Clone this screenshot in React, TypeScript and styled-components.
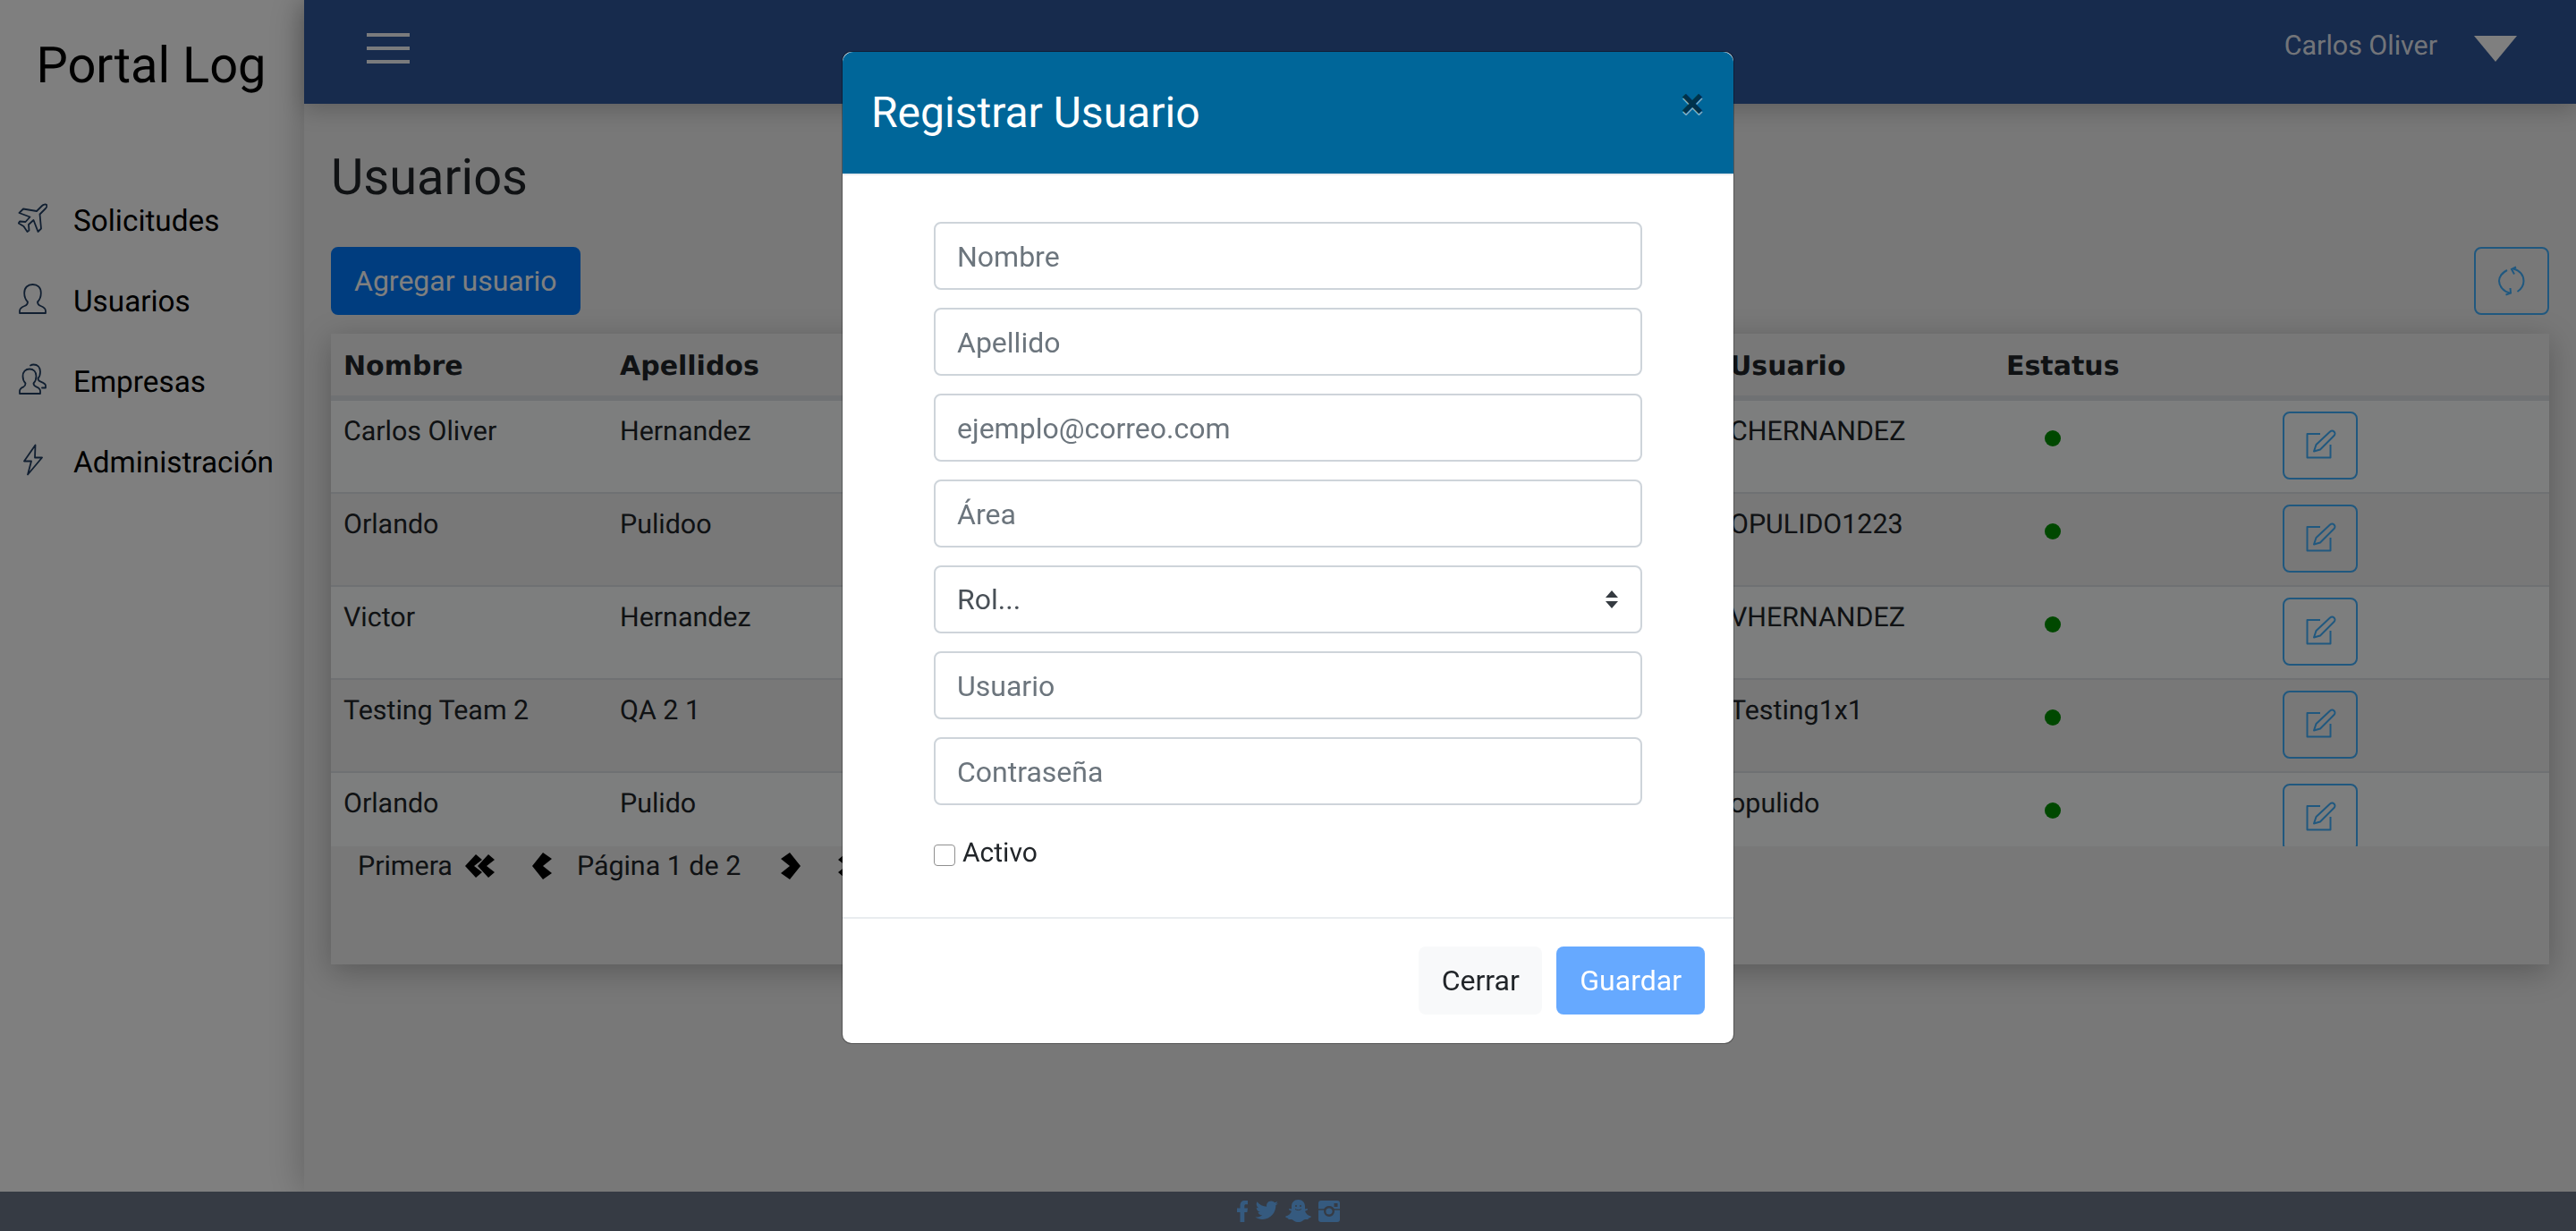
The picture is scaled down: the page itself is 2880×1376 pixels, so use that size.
import React from 'react'
import styled, { createGlobalStyle } from 'styled-components'

const GlobalStyle = createGlobalStyle`
  html, body {
    margin: 0;
    padding: 0;
    height: 100%;
    overflow: hidden;
    background: #fff;
  }

  * {
    box-sizing: border-box;
  }

  body {
    font-family: Roboto, "Liberation Sans", sans-serif;
    color: #212529;
    text-rendering: geometricPrecision;
  }
`

const Page = styled.div`
  width: 2880px;
  height: 1376px;
  display: flex;
  flex-direction: column;
  overflow: hidden;
`

const Body = styled.div`
  flex: 1;
  min-height: 0;
  display: flex;
`

const Sidebar = styled.aside`
  width: 340px;
  flex-shrink: 0;
  background: #fff;
`

const Brand = styled.div`
  height: 150px;
  padding: 40px 2px 0 0;
  font-size: 56px;
  line-height: 66px;
  text-align: center;
  color: #000;
`

const Nav = styled.nav`
  padding-top: 52px;
  display: flex;
  flex-direction: column;
`

const NavItem = styled.a`
  height: 90px;
  padding-left: 20px;
  display: flex;
  align-items: center;
  gap: 29px;
  font-size: 33.3px;
  color: #000;

  svg {
    width: 33px;
    height: 36px;
    flex-shrink: 0;
    margin-top: -6px;
  }
`

const Main = styled.div`
  flex: 1;
  min-width: 0;
  display: flex;
  flex-direction: column;
  background: #f0f0f0;
  box-shadow: 0 0 40px rgba(0, 0, 0, 0.25);
  position: relative;
`

const Topbar = styled.header`
  height: 116px;
  flex-shrink: 0;
  padding: 0 66px 0 70px;
  display: flex;
  align-items: center;
  justify-content: space-between;
  background: #2e569a;
  box-shadow: 0 6px 24px rgba(0, 0, 0, 0.22);
  position: relative;
`

const Burger = styled.div`
  width: 48px;
  height: 34px;
  margin-top: -8px;
  display: flex;
  flex-direction: column;
  justify-content: space-between;

  span {
    height: 4px;
    background: #fff;
    opacity: 0.95;
  }
`

const UserMenu = styled.div`
  display: flex;
  align-items: center;
  gap: 41px;
  margin-top: -13px;
  font-size: 30.4px;
  color: rgba(255, 255, 255, 0.9);
`

const Caret = styled.span`
  width: 0;
  height: 0;
  margin-top: 5px;
  border-left: 24px solid transparent;
  border-right: 24px solid transparent;
  border-top: 29px solid #fff;
`

const Content = styled.main`
  flex: 1;
  min-height: 0;
  padding: 43px 30px 0;
`

const Title = styled.h1`
  margin: 0;
  height: 117px;
  font-size: 56px;
  line-height: 78px;
  font-weight: 400;
`

const Toolbar = styled.div`
  height: 76px;
  display: flex;
  justify-content: space-between;
`

const PrimaryButton = styled.button`
  height: 76px;
  padding: 0 24px;
  border: 2px solid #007bff;
  border-radius: 8px;
  background: #007bff;
  color: #fff;
  font-family: inherit;
  font-size: 32px;
`

const OutlineButton = styled.button`
  width: 84px;
  height: 76px;
  padding: 0;
  border: 2px solid #40b0ff;
  border-radius: 8px;
  background: transparent;
  color: #40b0ff;
  display: flex;
  align-items: center;
  justify-content: center;

  svg {
    width: 36px;
    height: 36px;
  }
`

const Card = styled.section`
  margin-top: 21px;
  height: 705px;
  background: #f0f0f0;
  box-shadow: 0 8px 32px rgba(0, 0, 0, 0.25);
`

const TableClip = styled.div`
  height: 573px;
  overflow: hidden;
`

const Table = styled.table`
  width: 2480px;
  table-layout: fixed;
  border-collapse: separate;
  border-spacing: 0;
  font-size: 30.4px;
`

const HeadCell = styled.th`
  height: 73px;
  padding: 4px 14px 0;
  text-align: left;
  font-family: "DejaVu Sans", sans-serif;
  font-size: 30px;
  font-weight: 700;
  line-height: 40px;
  border-bottom: 4px solid #dee2e6;
`

const Row = styled.tr<{ $striped: boolean }>`
  height: 104px;
  background: ${({ $striped }) => ($striped ? '#fafdfc' : '#f0f0f0')};
`

const Cell = styled.td`
  padding: 12px 14px;
  vertical-align: top;
  line-height: 45px;
  color: #212529;
  border-top: 2px solid #dee2e6;
`

const StatusDot = styled.span`
  display: block;
  width: 18px;
  height: 18px;
  margin: 21px 0 0 43px;
  border-radius: 50%;
  background: #009000;
`

const Pagination = styled.div`
  padding: 0 0 0 30px;
  display: flex;
  align-items: center;
  height: 44px;
  font-size: 30.4px;
  white-space: nowrap;
  overflow: hidden;

  svg {
    flex-shrink: 0;
    fill: #000;
  }
`

const PageLabel = styled.span<{ $gap: number }>`
  margin-left: ${({ $gap }) => $gap}px;
`

const PageIcon = styled.svg<{ $gap: number }>`
  margin-left: ${({ $gap }) => $gap}px;
`

const Footer = styled.footer`
  height: 44px;
  flex-shrink: 0;
  display: flex;
  align-items: center;
  justify-content: center;
  gap: 8px;
  background: #6c7789;
  position: relative;
  color: #6ab4ff;

  svg {
    display: block;
  }
`

const Backdrop = styled.div`
  position: fixed;
  inset: 0;
  background: rgba(0, 0, 0, 0.5);
`

const Modal = styled.div`
  position: fixed;
  top: 58px;
  left: 942px;
  width: 996px;
  height: 1108px;
  display: flex;
  flex-direction: column;
  background: #fff;
  border-radius: 10px;
  box-shadow: 0 0 0 1px rgba(0, 0, 0, 0.3);
`

const ModalHeader = styled.div`
  height: 138px;
  flex-shrink: 0;
  padding: 32px;
  display: flex;
  justify-content: space-between;
  background: #006699;
  border-bottom: 2px solid #e9ecef;
  border-radius: 12px 12px 0 0;
`

const ModalTitle = styled.h4`
  margin: 0;
  font-size: 48px;
  line-height: 72px;
  font-weight: 400;
  color: #fff;
`

const CloseButton = styled.button`
  height: 48px;
  margin: 2px 1px 0 0;
  padding: 0;
  border: 0;
  background: transparent;
  font-family: inherit;
  font-size: 48px;
  font-weight: 700;
  line-height: 48px;
  color: #000;
  opacity: 0.5;
  text-shadow: 0 2px 0 #fff;
`

const ModalBody = styled.form`
  flex: 1;
  padding: 52px 102px 0;
  display: flex;
  flex-direction: column;
  gap: 20px;
`

const fieldStyles = `
  width: 100%;
  height: 76px;
  flex-shrink: 0;
  border: 2px solid #ced4da;
  border-radius: 8px;
  background-color: #fff;
  font-family: inherit;
  font-size: 32px;
  color: #495057;
  outline: none;
`

const Input = styled.input`
  ${fieldStyles}
  padding: 2px 24px 0;

  &::placeholder {
    color: #6c757d;
    opacity: 1;
  }
`

const Select = styled.select`
  ${fieldStyles}
  padding: 0 24px;
  appearance: none;
  background-image: url("data:image/svg+xml,%3Csvg xmlns='http://www.w3.org/2000/svg' width='16' height='20' viewBox='0 0 16 20'%3E%3Cpath fill='%23343a40' d='M8 0l7 8H1zM8 20l-7-8h14z'/%3E%3C/svg%3E");
  background-repeat: no-repeat;
  background-position: right 24px center;
`

const CheckRow = styled.label`
  margin-top: 11px;
  display: flex;
  align-items: center;
  gap: 8px;
  font-size: 30px;
  line-height: 45px;
  color: #212529;
`

const CheckBox = styled.input`
  width: 24px;
  height: 24px;
  margin: 4px 0 0;
  appearance: none;
  border: 1px solid #8f8f8f;
  border-radius: 4px;
  background: #fff;
`

const ModalFooter = styled.div`
  height: 141px;
  flex-shrink: 0;
  padding: 31px 32px 32px;
  display: flex;
  justify-content: flex-end;
  gap: 16px;
  border-top: 2px solid #e9ecef;
`

const CloseAction = styled.button`
  height: 76px;
  padding: 0 25.5px;
  border: 0;
  border-radius: 8px;
  background: #f8f9fa;
  color: #212529;
  font-family: inherit;
  font-size: 32px;
`

const SaveAction = styled.button`
  height: 76px;
  padding: 0 26px;
  border: 0;
  border-radius: 8px;
  background: #66a9ff;
  color: #fff;
  font-family: inherit;
  font-size: 32px;
`

const navStroke = '#223f63'

const PlaneIcon = () => (
  <svg viewBox="0 -1.5 33 36" fill="none" stroke={navStroke} strokeWidth="1.8" strokeLinejoin="round">
    <path d="M32 1.5c-1-1-3.5-.5-5 1L21 8.5 6 6 1.5 10.5 13.5 15 8.5 20.5 2 20 .8 22 6.5 25.5 10.5 31.5 12.5 30 12 23.5 17.5 18.5 22.5 31.5 26 28 24.5 12l6-6c1.5-1.5 2.5-3.5 1.5-4.5z" />
  </svg>
)

const UserIcon = () => (
  <svg viewBox="0 0 33 36" fill="none" stroke={navStroke} strokeWidth="1.8" strokeLinejoin="round">
    <path d="M11 21.5c-3-3-3.8-6.5-3.8-10C7.2 5.5 11 2 16.5 2s9.3 3.5 9.3 9.5c0 3.5-.8 7-3.8 10 0 2.5 1 3.5 3.5 4.5 3 1.2 5.5 3 5.5 5.5V34H2v-2.5c0-2.5 2.5-4.3 5.5-5.5 2.5-1 3.5-2 3.5-4.5z" />
  </svg>
)

const PeopleIcon = () => (
  <svg viewBox="0 0 33 36" fill="none" stroke={navStroke} strokeWidth="1.8" strokeLinejoin="round" strokeLinecap="round">
    <path d="M8.5 22.5c-2.2-2.2-3-5-3-8 0-5 3-8 7.5-8s7.5 3 7.5 8c0 3-.8 5.8-3 8 0 2 .8 3 3 3.8 2.5 1 4.5 2.5 4.5 4.7V34H2v-3c0-2.2 2-3.7 4.5-4.7 1.8-.8 2-1.8 2-3.8z" />
    <path d="M14 2.5c1-.6 2.5-1 3.5-1 4.5 0 7.5 3 7.5 8 0 3-.5 5.5-2.5 7.5 0 2 .8 2.8 3 3.6 2.5 1 5.5 2.4 5.5 4.4v2.5h-4" />
  </svg>
)

const EnergyIcon = () => (
  <svg viewBox="0 0 33 36" fill="none" stroke={navStroke} strokeWidth="1.8" strokeLinejoin="round">
    <path d="M19.5 1.5L7 19.5h8L11 34.5l16-19h-8l.5-14z" />
  </svg>
)

const RefreshIcon = () => (
  <svg viewBox="0 -1 36 36" fill="none" stroke="currentColor" strokeWidth="2">
    <path d="M20 3.5C27 5 31.5 10.5 31.5 17c0 4.5-2.5 9-7 12" />
    <path d="M13 5C7.5 8 4 12 4 17c0 6 5 12 12 13.5" />
    <path d="M23 1.5L18 4l3 5.5M16.5 25l.5 5.5-5.5 2" />
  </svg>
)

const EditIcon = () => (
  <svg viewBox="0 0 36 36" fill="none" stroke="currentColor" strokeWidth="2" strokeLinejoin="round">
    <path d="M18 5H3.5v26.5h26V17" />
    <path d="M11 24.5l2.5-7.5L29 2.500c1.500-1.300 3.500-1 4.500 0s1.500 3 0 4.500L18 22.500z" />
  </svg>
)

const DoubleLeft = ({ gap }: { gap: number }) => (
  <PageIcon $gap={gap} viewBox="0 0 33 28" width="33" height="28">
    <path d="M0 14L12 1l7 6-9 7 9 7-7 6z" />
    <path d="M14 14L26 1l7 6-9 7 9 7-7 6z" />
  </PageIcon>
)

const DoubleRight = ({ gap }: { gap: number }) => (
  <PageIcon $gap={gap} viewBox="0 0 33 28" width="33" height="28">
    <path d="M33 14L21 1l-7 6 9 7-9 7 7 6z" />
    <path d="M19 14L7 1 0 7l9 7-9 7 7 6z" />
  </PageIcon>
)

const ChevronLeft = ({ gap }: { gap: number }) => (
  <PageIcon $gap={gap} viewBox="0 0 22 32" width="22" height="32">
    <path d="M0 16L12 1l10 7-10 8 10 8-10 7z" />
  </PageIcon>
)

const ChevronRight = ({ gap }: { gap: number }) => (
  <PageIcon $gap={gap} viewBox="0 0 22 32" width="22" height="32">
    <path d="M22 16L10 1 0 8l10 8-10 8 10 7z" />
  </PageIcon>
)

const FacebookIcon = () => (
  <svg width="12" height="24" viewBox="0 0 12 24" fill="currentColor">
    <path d="M3.5 24V13H0V8.5h3.5V5.5C3.5 2 5.5 0 8.8 0H12v4.3H10c-1.3 0-1.700.6-1.700 1.700v2.500H12L11.400 13H8.300v11z" />
  </svg>
)

const TwitterIcon = () => (
  <svg width="26" height="24" viewBox="0 0 26 24" fill="currentColor">
    <path d="M26 3c-.9.5-1.9.8-3 .9 1-.7 1.900-1.700 2.300-2.900-1 .6-2.100 1-3.300 1.300C21 1.200 19.700.5 18.200.5c-3.400 0-5.800 3-5 6.300C8.900 6.600 5 4.500 2.400 1.300 1 3.700 1.700 6.700 4 8.300c-.8 0-1.600-.3-2.300-.6 0 2.500 1.700 4.600 4.100 5.100-.7.200-1.500.2-2.300.1.600 2 2.500 3.500 4.800 3.600C6.100 18 3.200 18.800.4 18.500c2.300 1.500 5 2.400 8 2.400 9.700 0 15.200-8.200 14.900-15.600 1-.7 1.900-1.500 2.700-2.300z" />
  </svg>
)

const SnapchatIcon = () => (
  <svg width="29" height="26" viewBox="0 0 29 26">
    <path fill="currentColor" d="M14.5 0c4.700 0 7.500 3.200 7.500 7.500v3l2.300-.5c1 0 1 1.300 0 1.800l-2.300 1c.8 2.800 3.500 5 6.500 5.700.8.600 0 1.700-2.500 2.200-.4 1-.6 1.500-1.500 1.400-2-.2-3.500.1-5 1.300-1.600 1.300-3 1.600-5 1.600s-3.400-.3-5-1.600c-1.500-1.200-3-1.500-5-1.300-.9.100-1.100-.4-1.500-1.400C.5 20.200-.3 19.100.5 18.500c3-.7 5.700-2.900 6.500-5.700l-2.300-1c-1-.5-1-1.800 0-1.800l2.300.5v-3C7 3.200 9.800 0 14.500 0z" />
    <circle cx="12" cy="7" r="1" fill="#6c7789" />
    <circle cx="17" cy="7" r="1" fill="#6c7789" />
    <path d="M11 10.500c2 1.500 5 1.500 7 0" fill="none" stroke="#6c7789" strokeWidth="1" />
  </svg>
)

const InstagramIcon = () => (
  <svg width="24" height="24" viewBox="0 0 24 24">
    <rect width="24" height="24" rx="3" fill="currentColor" />
    <path d="M0 10h6.5a6.5 6.5 0 0 1 11 0H24" fill="none" stroke="#6c7789" strokeWidth="1.5" />
    <circle cx="12" cy="12" r="4.8" fill="none" stroke="#6c7789" strokeWidth="2.4" />
    <rect x="17.5" y="3" width="4" height="4" fill="#6c7789" />
  </svg>
)

const users = [
  { name: 'Carlos Oliver', lastName: 'Hernandez', login: 'CHERNANDEZ' },
  { name: 'Orlando', lastName: 'Pulidoo', login: 'OPULIDO1223' },
  { name: 'Victor', lastName: 'Hernandez', login: 'VHERNANDEZ' },
  { name: 'Testing Team 2', lastName: 'QA 2 1', login: 'Testing1x1' },
  { name: 'Orlando', lastName: 'Pulido', login: 'opulido' },
]

const navItems = [
  { label: 'Solicitudes', icon: <PlaneIcon /> },
  { label: 'Usuarios', icon: <UserIcon /> },
  { label: 'Empresas', icon: <PeopleIcon /> },
  { label: 'Administración', icon: <EnergyIcon /> },
]

const App = () => {
  return (
    <>
      <GlobalStyle />
      <Page>
        <Body>
          <Sidebar>
            <Brand>Portal Log</Brand>
            <Nav>
              {navItems.map((item) => (
                <NavItem key={item.label}>
                  {item.icon}
                  {item.label}
                </NavItem>
              ))}
            </Nav>
          </Sidebar>
          <Main>
            <Topbar>
              <Burger>
                <span />
                <span />
                <span />
              </Burger>
              <UserMenu>
                Carlos Oliver
                <Caret />
              </UserMenu>
            </Topbar>
            <Content>
              <Title>Usuarios</Title>
              <Toolbar>
                <PrimaryButton>Agregar usuario</PrimaryButton>
                <OutlineButton>
                  <RefreshIcon />
                </OutlineButton>
              </Toolbar>
              <Card>
                <TableClip>
                  <Table>
                    <colgroup>
                      <col width="309" />
                      <col width="1241" />
                      <col width="309" />
                      <col width="309" />
                      <col width="312" />
                    </colgroup>
                    <thead>
                      <tr>
                        <HeadCell>Nombre</HeadCell>
                        <HeadCell>Apellidos</HeadCell>
                        <HeadCell>Usuario</HeadCell>
                        <HeadCell>Estatus</HeadCell>
                        <HeadCell />
                      </tr>
                    </thead>
                    <tbody>
                      {users.map((user, index) => (
                        <Row key={user.login} $striped={index % 2 === 0}>
                          <Cell>{user.name}</Cell>
                          <Cell>{user.lastName}</Cell>
                          <Cell>{user.login}</Cell>
                          <Cell>
                            <StatusDot />
                          </Cell>
                          <Cell>
                            <OutlineButton>
                              <EditIcon />
                            </OutlineButton>
                          </Cell>
                        </Row>
                      ))}
                    </tbody>
                  </Table>
                </TableClip>
                <Pagination>
                  Primera
                  <DoubleLeft gap={14} />
                  <ChevronLeft gap={42} />
                  <PageLabel $gap={28}>Página 1 de 2</PageLabel>
                  <ChevronRight gap={45} />
                  <DoubleRight gap={42} />
                </Pagination>
              </Card>
            </Content>
          </Main>
        </Body>
        <Footer>
          <FacebookIcon />
          <TwitterIcon />
          <SnapchatIcon />
          <InstagramIcon />
        </Footer>
        <Backdrop />
        <Modal>
          <ModalHeader>
            <ModalTitle>Registrar Usuario</ModalTitle>
            <CloseButton type="button">×</CloseButton>
          </ModalHeader>
          <ModalBody>
            <Input placeholder="Nombre" />
            <Input placeholder="Apellido" />
            <Input placeholder="ejemplo@correo.com" />
            <Input placeholder="Área" />
            <Select defaultValue="">
              <option value="">Rol...</option>
            </Select>
            <Input placeholder="Usuario" />
            <Input placeholder="Contraseña" />
            <CheckRow>
              <CheckBox type="checkbox" />
              Activo
            </CheckRow>
          </ModalBody>
          <ModalFooter>
            <CloseAction type="button">Cerrar</CloseAction>
            <SaveAction type="button">Guardar</SaveAction>
          </ModalFooter>
        </Modal>
      </Page>
    </>
  )
}

export default App
